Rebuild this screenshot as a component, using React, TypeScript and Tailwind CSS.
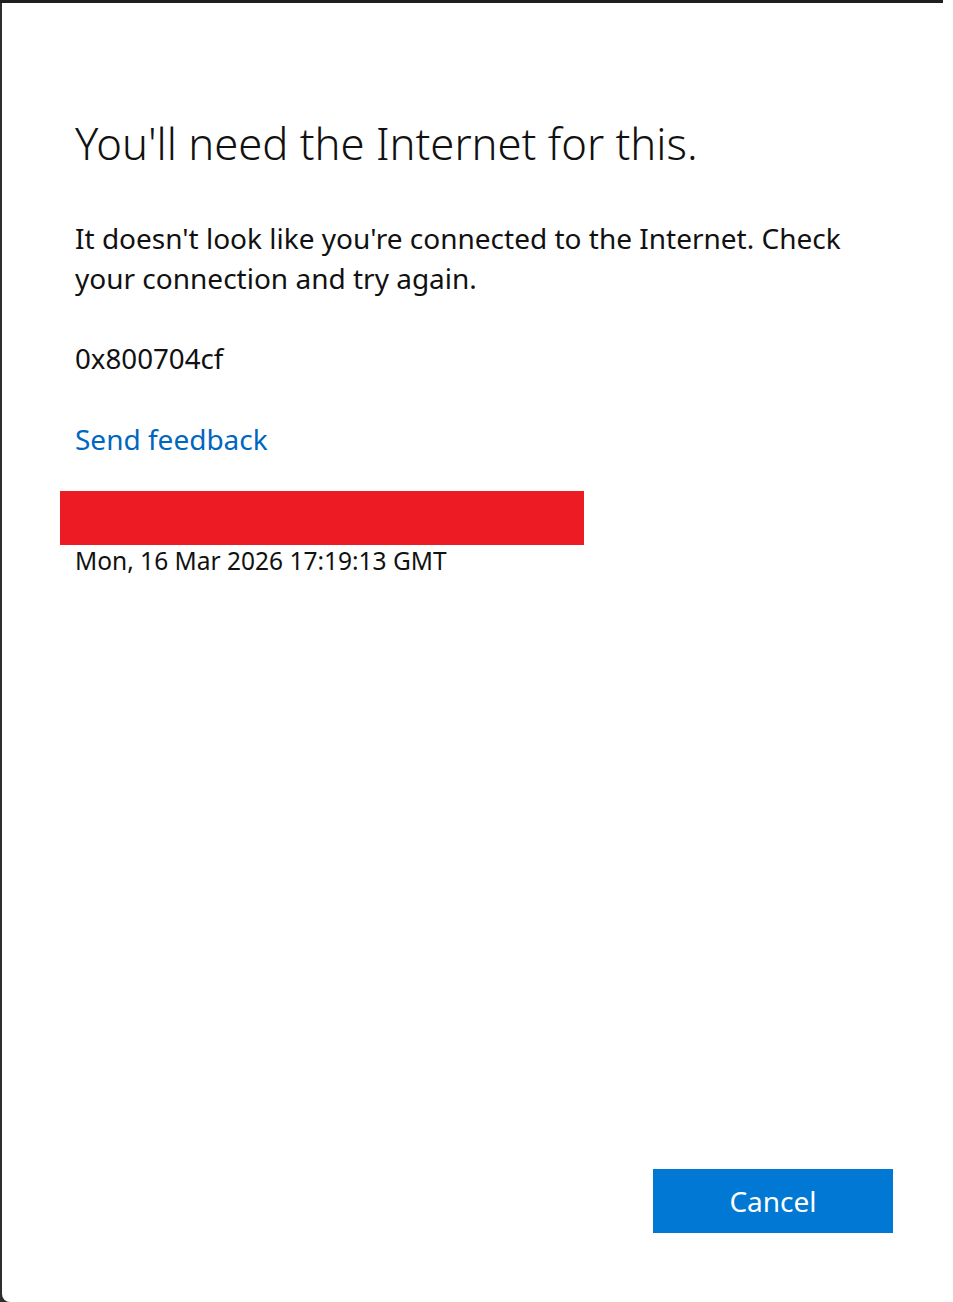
import React from "react";

export default function App() {
  return (
    <div className="w-[953px] h-[1302px] bg-white flex flex-col" style={{ fontFamily: '"Noto Sans", "Open Sans", sans-serif' }}>
      <div className="w-[943px] h-[3px] bg-[#1f1f1f] shrink-0" />
      <div className="flex flex-1 bg-[#2e2e2e]">
        <div className="w-[2px]" />
        <div className="flex-1 bg-white rounded-bl-[8px] flex flex-col pl-[73px] pr-[60px]">
          <h1 className="mt-[110px] text-[43.6px] font-light leading-[60px] text-[#111]">You'll need the Internet for this.</h1>
          <p className="mt-[45px] w-[800px] text-[28px] leading-[40px] text-[#111]">
            It doesn't look like you're connected to the Internet. Check your connection and try again.
          </p>
          <p className="mt-[40px] text-[27.7px] leading-[40px] text-[#111]">0x800704cf</p>
          <a className="mt-[41px] self-start text-[28px] leading-[40px] text-[#0067c0]">Send feedback</a>
          <div className="mt-[32px] -ml-[15px] w-[524px] h-[54px] bg-[#ed1c24]" />
          <p className="text-[24.5px] leading-[32px] text-[#111]">Mon, 16 Mar 2026 17:19:13 GMT</p>
          <div className="flex-1" />
          <div className="flex justify-end mb-[69px]">
            <button className="w-[240px] h-[64px] bg-[#0078d4] text-white text-[28px]">Cancel</button>
          </div>
        </div>
      </div>
    </div>
  );
}
